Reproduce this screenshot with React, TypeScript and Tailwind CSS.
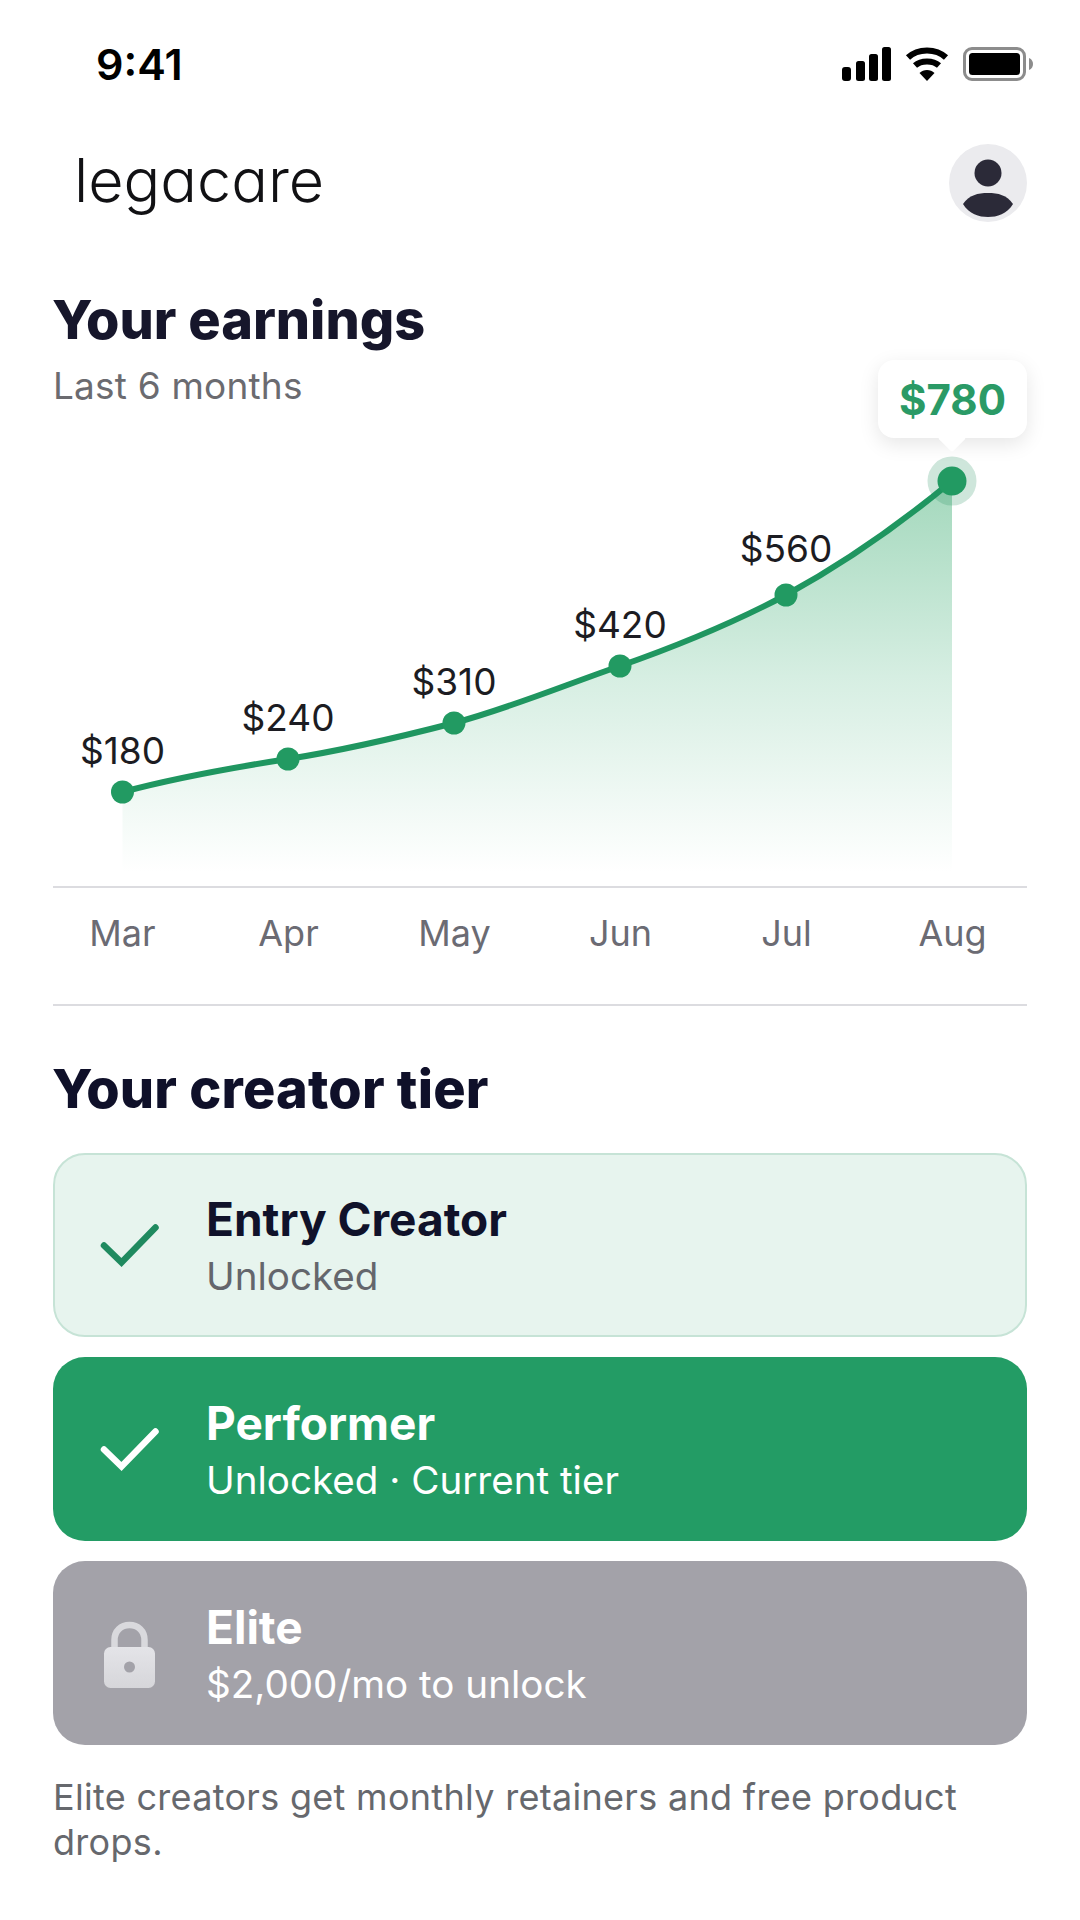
export default function App() {
  const F = "font-['Inter','Liberation_Sans',sans-serif]";
  const Check = ({ c }: { c: string }) => (
    <svg viewBox="0 0 60 60" className="w-[60px] h-[60px]" fill="none">
      <path d="M4 30.500 L21.500 47.500 L55.500 12.500" stroke={c} strokeWidth="6.500" strokeLinecap="round" strokeLinejoin="miter" />
    </svg>
  );
  const months = ["Mar", "Apr", "May", "Jun", "Jul", "Aug"];
  const line = "M122.500 792 C175 778 230 768 288 759 C345 750 400 737 454 723 C510 708 565 685 620 666 C680 645 735 622 786 595 C850 560 905 520 952 481";
  const pts: [number, number][] = [[122.5, 792], [288, 759], [454, 723], [620, 666], [786, 595]];
  return (
    <div className={`${F} w-[1080px] h-[1920px] bg-white flex flex-col overflow-hidden`}>
      <div className="h-[88px] pt-[40px] pl-[96px] pr-[47px] flex justify-between items-start">
        <span className="text-[43px] leading-[48px] font-semibold text-black">9:41</span>
        <svg viewBox="0 0 191 34" className="w-[191px] h-[34px] mt-[7px]">
          <rect x="0" y="20" width="9" height="14" rx="3" fill="#000" />
          <rect x="14" y="14" width="9" height="20" rx="2.500" fill="#000" />
          <rect x="27" y="7" width="9" height="27" rx="2.500" fill="#000" />
          <rect x="40" y="0" width="9" height="34" rx="2.500" fill="#000" />
          <path d="M66 10.500 C76 1 94 1 104 10.500" fill="none" stroke="#000" strokeWidth="6" />
          <path d="M73 18.500 C79 13 91 13 97 18.500" fill="none" stroke="#000" strokeWidth="6" />
          <path d="M77.500 26 C81.500 22 88.500 22 92.500 26 L85 34 Z" fill="#000" />
          <rect x="122.500" y="1.500" width="60" height="31" rx="7.500" fill="none" stroke="#8c8c8c" strokeWidth="3" />
          <rect x="127" y="6" width="51" height="22" rx="3.500" fill="#000" />
          <path d="M187 11 C190 12 191 15 191 17 C191 19 190 22 187 23 Z" fill="#8c8c8c" />
        </svg>
      </div>

      <div className="mt-[56px] h-[78px] pl-[74px] pr-[53px] flex justify-between items-center">
        <span className="text-[61px] leading-[78px] font-light text-[#111114] [font-feature-settings:'cv11'] relative -top-[3px]">legacare</span>
        <div className="w-[78px] h-[78px] rounded-full bg-[#ebebee] overflow-hidden">
          <svg viewBox="0 0 78 78" className="w-[78px] h-[78px]">
            <circle cx="39" cy="29" r="13.500" fill="#2b2a38" />
            <path d="M14 60 C20 51 29 49 39 49 C49 49 58 51 64 60 C58 70 48 73 39 73 C30 73 20 70 14 60 Z" fill="#2b2a38" />
          </svg>
        </div>
      </div>

      <div className="px-[53px]">
        <h1 className="mt-[68px] text-[54px] leading-[60px] font-extrabold text-[#16162b] -ml-[1px]">Your earnings</h1>
        <p className="mt-[14px] text-[37px] leading-[44px] text-[#6b6b70] tracking-[0.2px]">Last 6 months</p>

        <div className="relative h-[478px]">
          <svg viewBox="53 408 974 478" className="absolute left-0 top-0 w-[974px] h-[478px]">
            <defs>
              <linearGradient id="area" gradientUnits="userSpaceOnUse" x1="0" y1="481" x2="0" y2="872">
                <stop offset="0" stopColor="#a3d8bc" />
                <stop offset="0.5" stopColor="#d6eee2" />
                <stop offset="1" stopColor="#ffffff" />
              </linearGradient>
              <linearGradient id="lock" x1="0" y1="0" x2="0" y2="1">
                <stop offset="0" stopColor="#e4e4e8" />
                <stop offset="1" stopColor="#d6d6da" />
              </linearGradient>
            </defs>
            <path d={`${line} L952 872 L122.500 872 Z`} fill="url(#area)" />
            <path d={line} fill="none" stroke="#1f9660" strokeWidth="6" strokeLinecap="round" />
            {pts.map(([x, y]) => (
              <circle key={x} cx={x} cy={y} r="11.500" fill="#229a62" />
            ))}
            <circle cx="952" cy="481" r="24.500" fill="#1f8f5c" fillOpacity="0.22" />
            <circle cx="952" cy="481" r="14.500" fill="#229a62" />
          </svg>
          <span className="absolute left-[9.5px] top-[321px] w-[120px] text-center text-[37px] leading-[44px] text-[#1c1c22]">$180</span>
          <span className="absolute left-[175px] top-[288px] w-[120px] text-center text-[37px] leading-[44px] text-[#1c1c22]">$240</span>
          <span className="absolute left-[341px] top-[252px] w-[120px] text-center text-[37px] leading-[44px] text-[#1c1c22]">$310</span>
          <span className="absolute left-[507px] top-[195px] w-[120px] text-center text-[37px] leading-[44px] text-[#1c1c22]">$420</span>
          <span className="absolute left-[673px] top-[119px] w-[120px] text-center text-[37px] leading-[44px] text-[#1c1c22]">$560</span>
          <div className="absolute right-0 -top-[48px] w-[149px] h-[78px] rounded-[16px] bg-white shadow-[0_6px_20px_rgba(0,0,0,0.10)] flex items-center justify-center text-[42px] font-bold text-[#2a9a66]">
            $780
            <span className="absolute left-[64px] top-[68px] w-[20px] h-[20px] rotate-45 bg-white rounded-[2px]" />
          </div>
        </div>

        <div className="border-t-2 border-b-2 border-[#dcdce0] h-[120px]">
          <div className="grid grid-cols-6 w-[996px] -ml-[13.5px] h-full items-center pb-[26px]">
            {months.map((m) => (
              <span key={m} className="text-center text-[36px] leading-[44px] text-[#6b6b73]">{m}</span>
            ))}
          </div>
        </div>

        <h2 className="mt-[53px] text-[54px] leading-[60px] font-extrabold text-[#0f1029] -ml-[1px] tracking-[0.2px]">Your creator tier</h2>

        <div className="mt-[34px] flex flex-col gap-[20px]">
          <div className="h-[184px] rounded-[32px] bg-[#e7f4ee] border-2 border-[#c6e3d6] flex items-center pl-[45px] gap-[46px]">
            <Check c="#1f8a5f" />
            <div className="pt-[5px]">
              <div className="text-[46px] leading-[56px] font-bold text-[#10122a]">Entry Creator</div>
              <div className="text-[38.6px] leading-[58px] text-[#64666c]">Unlocked</div>
            </div>
          </div>
          <div className="h-[184px] rounded-[32px] bg-[#239c65] flex items-center pl-[47px] gap-[46px]">
            <Check c="#ffffff" />
            <div className="pt-[5px]">
              <div className="text-[46px] leading-[56px] font-bold text-white">Performer</div>
              <div className="text-[38.6px] leading-[58px] text-white">Unlocked · Current tier</div>
            </div>
          </div>
          <div className="h-[184px] rounded-[32px] bg-[#a3a2a9] flex items-center pl-[47px] gap-[46px]">
            <svg viewBox="0 0 60 70" className="w-[60px] h-[70px] mt-[4px]">
              <path d="M14.500 30 V20 C14.500 11 21 5 29.500 5 C38 5 44.500 11 44.500 20 V30" fill="none" stroke="#d9d9dd" strokeWidth="6.500" />
              <rect x="4" y="27" width="51" height="41" rx="6.500" fill="url(#lock)" />
              <circle cx="29.500" cy="47" r="5.500" fill="#a3a2a9" />
            </svg>
            <div className="pt-[5px]">
              <div className="text-[46px] leading-[56px] font-bold text-white">Elite</div>
              <div className="text-[38.6px] leading-[58px] text-white">$2,000/mo to unlock</div>
            </div>
          </div>
        </div>

        <p className="mt-[30px] text-[36px] leading-[45px] text-[#66686d] tracking-[0.3px]">Elite creators get monthly retainers and free product drops.</p>
      </div>
    </div>
  );
}
